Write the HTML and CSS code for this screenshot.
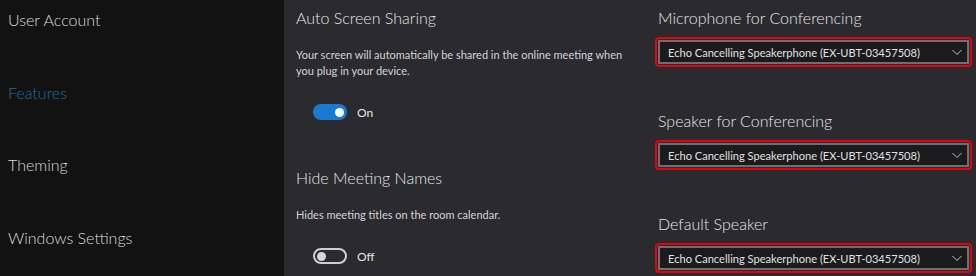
FILE: index.html
```html
<!DOCTYPE html>
<html>
<head>
<meta charset="utf-8">
<link rel="stylesheet" href="styles.css">
</head>
<body>
<div class="app">
  <nav class="sidebar">
    <div class="nav-item">User Account</div>
    <div class="nav-item active">Features</div>
    <div class="nav-item">Theming</div>
    <div class="nav-item">Windows Settings</div>
  </nav>
  <main class="content">
    <section class="col left">
      <div class="setting">
        <h2 class="title">Auto Screen Sharing</h2>
        <p class="desc">Your screen will automatically be shared in the online meeting when you plug in your device.</p>
        <div class="toggle-row">
          <span class="toggle on"><span class="knob"></span></span>
          <span class="toggle-label">On</span>
        </div>
      </div>
      <div class="setting second">
        <h2 class="title">Hide Meeting Names</h2>
        <p class="desc">Hides meeting titles on the room calendar.</p>
        <div class="toggle-row">
          <span class="toggle off"><span class="knob"></span></span>
          <span class="toggle-label">Off</span>
        </div>
      </div>
    </section>
    <section class="col right">
      <div class="field">
        <h2 class="title">Microphone for Conferencing</h2>
        <div class="highlight">
          <div class="select">
            <span class="select-text">Echo Cancelling Speakerphone (EX-UBT-03457508)</span>
            <svg class="chev" width="12" height="8" viewBox="0 0 12 8"><path d="M1.5 2 L6 6.5 L10.5 2" fill="none" stroke="#c4c4c4" stroke-width="1"/></svg>
          </div>
        </div>
      </div>
      <div class="field">
        <h2 class="title">Speaker for Conferencing</h2>
        <div class="highlight">
          <div class="select">
            <span class="select-text">Echo Cancelling Speakerphone (EX-UBT-03457508)</span>
            <svg class="chev" width="12" height="8" viewBox="0 0 12 8"><path d="M1.5 2 L6 6.5 L10.5 2" fill="none" stroke="#c4c4c4" stroke-width="1"/></svg>
          </div>
        </div>
      </div>
      <div class="field">
        <h2 class="title">Default Speaker</h2>
        <div class="highlight">
          <div class="select">
            <span class="select-text">Echo Cancelling Speakerphone (EX-UBT-03457508)</span>
            <svg class="chev" width="12" height="8" viewBox="0 0 12 8"><path d="M1.5 2 L6 6.5 L10.5 2" fill="none" stroke="#c4c4c4" stroke-width="1"/></svg>
          </div>
        </div>
      </div>
    </section>
  </main>
</div>
</body>
</html>
```
FILE: styles.css
```css
* { box-sizing: border-box; }
html, body { margin: 0; padding: 0; }
body {
  background: #2b2a2f;
  font-family: "Lato", "Open Sans", sans-serif;
  color: #e4e4e4;
  width: 976px;
  height: 276px;
  overflow: hidden;
}
.app { display: flex; height: 276px; }
.sidebar {
  width: 284px;
  flex: none;
  background: #121212;
  padding: 8px 0 0 8px;
  display: flex;
  flex-direction: column;
  gap: 48.5px;
}
.nav-item {
  font-size: 16px;
  font-weight: 300;
  line-height: 24px;
  color: #dcdcdc;
}
.nav-item.active { color: #1a6f9f; }
.content {
  flex: 1;
  display: flex;
  padding-left: 12px;
}
.col.left { width: 362px; flex: none; padding-top: 6px; }
.col.right { flex: 1; padding-top: 6px; display: flex; flex-direction: column; gap: 42px; }
.title {
  margin: 0;
  font-size: 16px;
  font-weight: 300;
  line-height: 24px;
  color: #e6e6e6;
}
.desc {
  margin: 17px 0 0;
  font-size: 11px;
  line-height: 16px;
  color: #d4d4d4;
  width: 340px;
}
.toggle-row {
  display: flex;
  align-items: center;
  gap: 10px;
  margin: 25px 0 0 17px;
  height: 16px;
}
.setting.second { margin-top: 46px; }
.toggle {
  width: 34px;
  height: 16px;
  border-radius: 8px;
  display: flex;
  align-items: center;
  padding: 0 3px;
}
.toggle.on { background: #1a79d3; justify-content: flex-end; }
.toggle.off { border: 2px solid #cfcfcf; justify-content: flex-start; padding: 0 2px; }
.knob { width: 9px; height: 9px; border-radius: 50%; background: #fff; }
.toggle.off .knob { background: #d8d8d8; }
.toggle-label { font-size: 12px; color: #e4e4e4; }
.highlight {
  margin-top: 7px;
  margin-left: -3px;
  width: 317px;
  height: 30px;
  border: 2px solid #e8000c;
  border-radius: 4px;
  padding: 1px;
}
.select {
  height: 24px;
  border: 2px solid #6f6f72;
  background: #1b1b1d;
  display: flex;
  align-items: center;
  justify-content: space-between;
  padding: 0 4px 0 8px;
}
.select-text { font-size: 11.1px; color: #e0e0e0; }
.chev { display: block; }
```
